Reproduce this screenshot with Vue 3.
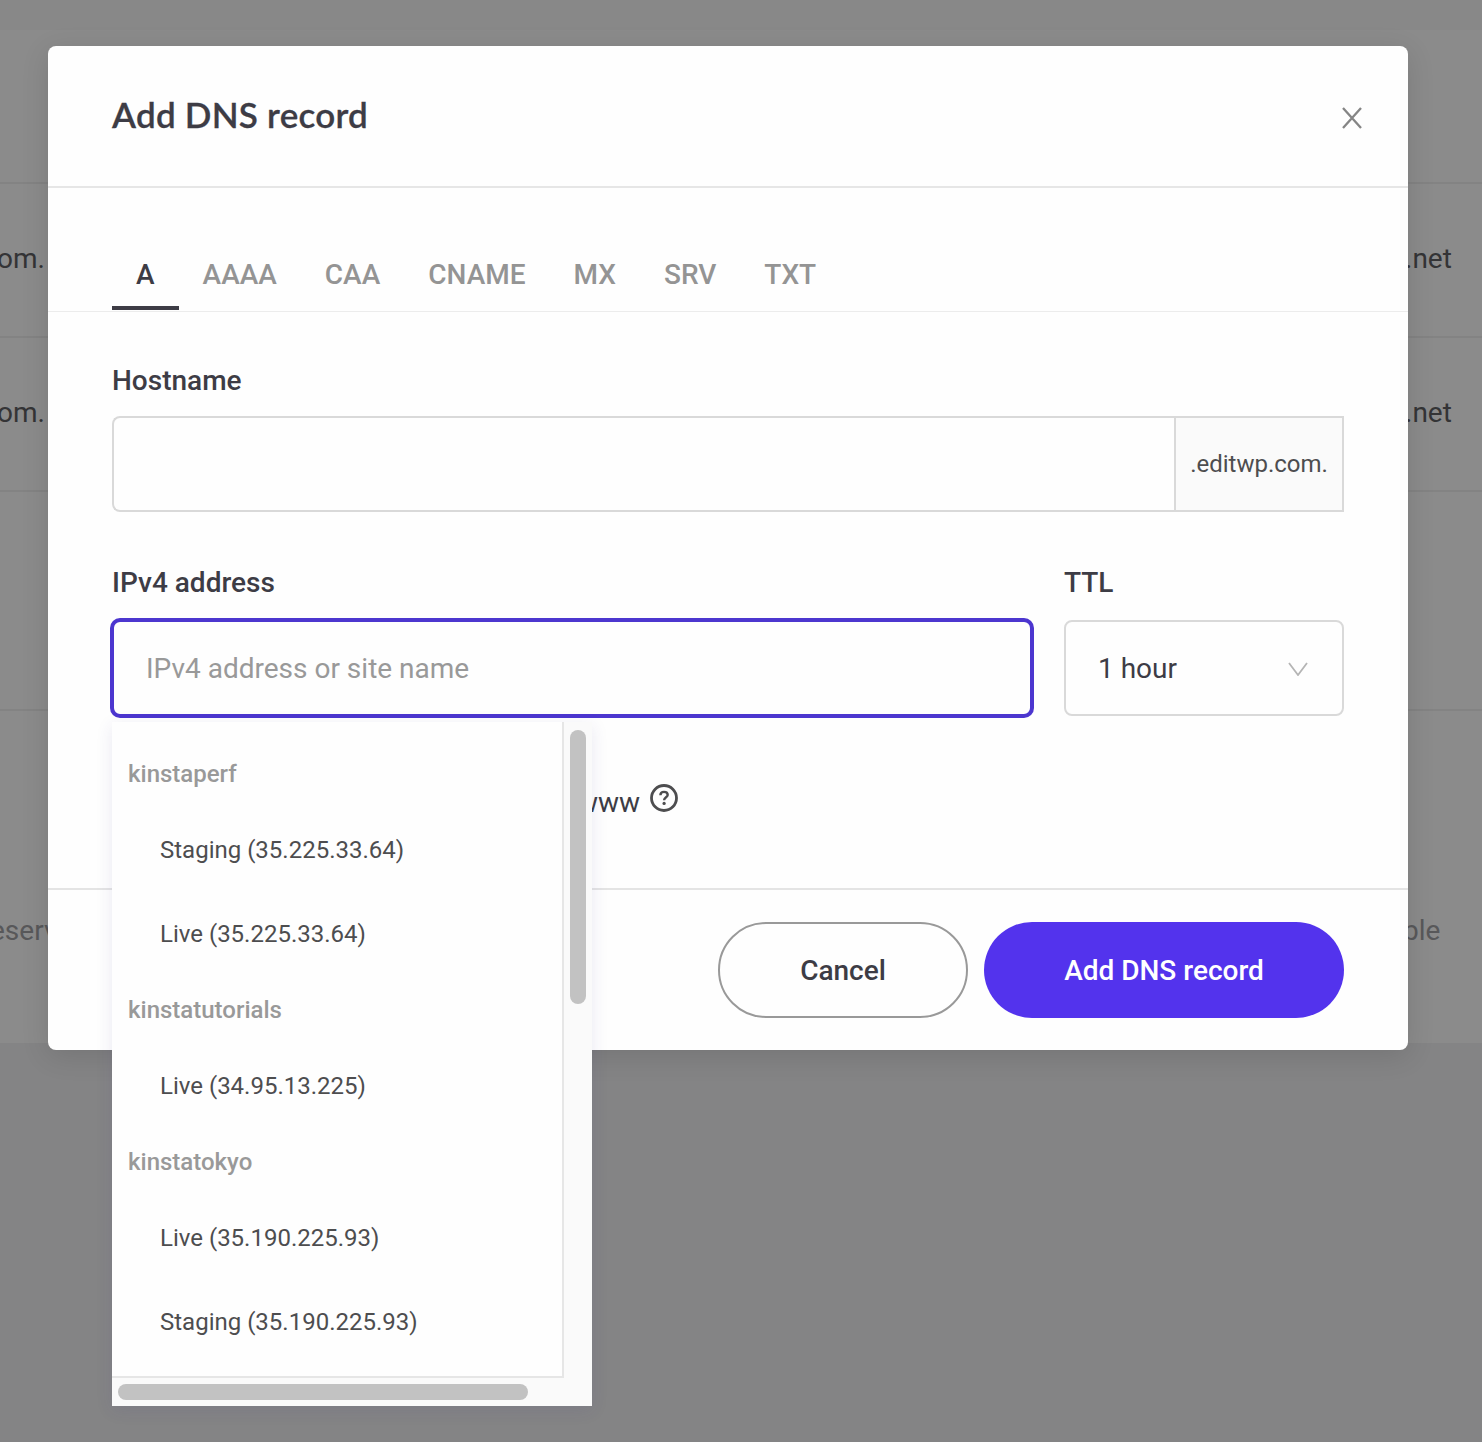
<template>
<div class="page">
    <div class="records">
        <div v-for="(row, i) in rows" :key="i" class="record" :class="row.type">
            <span class="record-name">{{ row.name }}</span>
            <span class="record-value">{{ row.value }}</span>
        </div>
    </div>

    <div class="overlay">
        <div class="modal">
            <div class="modal-header">
                <h1>Add DNS record</h1>
                <button type="button" class="close" aria-label="Close">
                    <svg width="20" height="22" viewBox="0 0 20 22" fill="none" stroke="#858585" stroke-width="2.3">
                        <path d="M1 1L19 21M19 1L1 21" />
                    </svg>
                </button>
            </div>

            <div class="tabs">
                <button
                    v-for="tab in tabs"
                    :key="tab"
                    type="button"
                    class="tab"
                    :class="{ active: tab === activeTab }"
                    @click="activeTab = tab"
                >{{ tab }}</button>
            </div>

            <div class="modal-body">
                <label class="label" for="hostname">Hostname</label>
                <div class="hostname">
                    <input id="hostname" v-model="hostname" type="text">
                    <span class="suffix">.editwp.com.</span>
                </div>

                <div class="fields">
                    <div class="field address">
                        <label class="label" for="address">IPv4 address</label>
                        <input id="address" v-model="address" type="text" class="address-input" placeholder="IPv4 address or site name">
                        <div class="dropdown">
                            <div class="options">
                                <div v-for="site in sites" :key="site.name">
                                    <div class="group">{{ site.name }}</div>
                                    <div v-for="env in site.envs" :key="env" class="option">{{ env }}</div>
                                </div>
                            </div>
                            <div class="track-y"><div class="thumb-y"></div></div>
                            <div class="track-x"><div class="thumb-x"></div></div>
                        </div>
                    </div>
                    <div class="field ttl">
                        <label class="label">TTL</label>
                        <div class="select">
                            <span>1 hour</span>
                            <svg width="20" height="14" viewBox="0 0 20 14" fill="none" stroke="#b5b5b5" stroke-width="1.8">
                                <path d="M1 1L10 13L19 1" />
                            </svg>
                        </div>
                    </div>
                </div>

                <div class="www-row">
                    <span>www</span>
                    <svg width="28" height="28" viewBox="0 0 28 28" fill="none" stroke="#4d4d4f">
                        <circle cx="14" cy="14" r="12.5" stroke-width="2.8" />
                        <path d="M10.4 11.2C10.4 9 12 7.9 14 7.9C16.2 7.9 17.7 9.1 17.7 11C17.7 13.2 14.1 13.5 14.1 16.3" stroke-width="2.4" />
                        <circle cx="14.1" cy="19.4" r="1.6" fill="#4d4d4f" stroke="none" />
                    </svg>
                </div>
            </div>

            <div class="modal-footer">
                <button type="button" class="btn cancel">Cancel</button>
                <button type="button" class="btn submit">Add DNS record</button>
            </div>
        </div>
    </div>
</div>
</template>


<script setup>
import { ref } from 'vue';

const tabs = ['A', 'AAAA', 'CAA', 'CNAME', 'MX', 'SRV', 'TXT'];
const activeTab = ref('A');

const hostname = ref('');
const address = ref('');

const sites = [
    { name: 'kinstaperf', envs: ['Staging (35.225.33.64)', 'Live (35.225.33.64)'] },
    { name: 'kinstatutorials', envs: ['Live (34.95.13.225)'] },
    { name: 'kinstatokyo', envs: ['Live (35.190.225.93)', 'Staging (35.190.225.93)'] }
];

const rows = [
    { type: 'head', name: '', value: '' },
    { type: 'row', name: 'om.', value: '.net' },
    { type: 'row', name: 'om.', value: '.net' },
    { type: 'spacer', name: '', value: '' },
    { type: 'foot', name: 'eserv', value: 'ble' }
];
</script>


<style>
body{
    margin: 0;
    overflow: hidden;
}
</style>

<style scoped>
*{
    box-sizing: border-box;
}

.page{
    position: relative;
    height: 1442px;
    overflow: hidden;
    background-color: #848485;
    color: #3d3c45;
    font-family: Roboto, "Liberation Sans", sans-serif;
    font-size: 28px;
}

button, input{
    font: inherit;
    letter-spacing: inherit;
    color: inherit;
}

/* dimmed table behind the dialog */
.records{
    padding-top: 30px;
    background-color: #8b8b8b;
    background-image: linear-gradient(#888888 30px, transparent 30px);
}

.record{
    display: flex;
    justify-content: space-between;
    align-items: center;
    height: 154px;
    padding-bottom: 2px;
    border-bottom: 2px solid #838383;
    color: #343436;
    line-height: 32px;
}

.record-name{
    margin-left: -3px;
}

.record-value{
    width: 77px;
}

.record.spacer{
    height: 219px;
}

.record.foot{
    height: 332px;
    padding-bottom: 0;
    border-bottom: 0;
    align-items: flex-start;
    padding-top: 204px;
    color: #58585a;
}

.foot .record-name{
    margin-left: -10px;
}

.foot .record-value{
    width: 79px;
}

.overlay{
    position: absolute;
    inset: 0;
    padding: 46px 74px 0 48px;
}

.modal{
    width: 1360px;
    height: 1004px;
    border-radius: 8px;
    background-color: #fefefe;
    box-shadow: 0 6px 28px rgba(0, 0, 0, 0.12);
    display: flex;
    flex-direction: column;
}

.modal-header{
    height: 142px;
    padding: 0 46px 0 64px;
    border-bottom: 2px solid #e6e6e6;
    display: flex;
    align-items: center;
    justify-content: space-between;
}

.modal-header h1{
    margin: 0 0 4px;
    font-family: Lato, sans-serif;
    font-size: 35px;
    font-weight: 600;
    line-height: 44px;
    letter-spacing: 0.25px;
    -webkit-text-stroke: 0.3px #3d3c45;
}

.close{
    display: flex;
    margin-top: 4px;
    padding: 0;
    border: 0;
    background: none;
}

.tabs{
    height: 124px;
    padding: 0 64px;
    border-bottom: 1px solid #ececec;
    display: flex;
    align-items: flex-end;
}

.tab{
    height: 70px;
    margin-bottom: 1px;
    padding: 2px 24px 0;
    border: 0;
    border-bottom: 4px solid transparent;
    background: none;
    color: #949494;
    font-weight: 500;
}

.tab.active{
    color: #3d3c45;
    border-bottom-color: #3d3c45;
}

.modal-body{
    height: 576px;
    padding: 52px 64px 0;
}

.label{
    display: block;
    height: 52px;
    line-height: 34px;
    font-weight: 500;
}

.hostname{
    height: 96px;
    display: flex;
    margin-bottom: 54px;
}

.hostname input{
    flex: 1;
    min-width: 0;
    border: 2px solid #d9d9d9;
    border-right: 0;
    border-radius: 8px 0 0 8px;
    background-color: #fefefe;
    outline: none;
}

.suffix{
    width: 170px;
    border: 2px solid #d9d9d9;
    background-color: #fafafa;
    color: #4d4d4f;
    font-size: 24px;
    display: flex;
    align-items: center;
    justify-content: center;
}

.fields{
    display: flex;
    gap: 32px;
}

.field{
    position: relative;
}

.field .label{
    height: 54px;
}

.address{
    width: 920px;
}

.address-input{
    display: block;
    width: 100%;
    height: 96px;
    padding: 0 32px;
    border: 2px solid #4c36cf;
    border-radius: 8px;
    background-color: #fefefe;
    box-shadow: 0 0 0 2px #4c36cf;
    outline: none;
}

.address-input::placeholder{
    color: #999999;
    opacity: 1;
}

.ttl{
    width: 280px;
}

.select{
    height: 96px;
    padding: 0 34px 0 32px;
    border: 2px solid #d9d9d9;
    border-radius: 8px;
    display: flex;
    align-items: center;
    justify-content: space-between;
}

.select svg{
    margin-top: 2px;
}

.www-row{
    display: flex;
    align-items: center;
    gap: 10px;
    height: 36px;
    margin-top: 68px;
    padding-left: 465px;
}

.www-row svg{
    margin-top: -8px;
}

.modal-footer{
    flex: 1;
    padding: 32px 64px;
    border-top: 2px solid #e4e4e4;
    display: flex;
    justify-content: flex-end;
    gap: 16px;
}

.btn{
    height: 96px;
    border-radius: 48px;
    font-weight: 500;
    padding: 0;
}

.cancel{
    width: 250px;
    border: 2px solid #999999;
    background-color: #fefefe;
}

.submit{
    width: 360px;
    border: 0;
    background-color: #5333ed;
    color: white;
}

/* site list hangs under the address input */
.dropdown{
    position: absolute;
    top: 156px;
    left: 0;
    z-index: 2;
    width: 480px;
    height: 684px;
    display: grid;
    grid-template-columns: 452px 28px;
    grid-template-rows: 656px 28px;
    background-color: #fafafa;
    box-shadow: 0 4px 16px rgba(60, 50, 140, 0.1);
}

.options{
    padding-top: 18px;
    overflow: hidden;
    border-right: 2px solid #e6e6e6;
    border-bottom: 2px solid #e6e6e6;
    background-color: #fefefe;
    font-size: 24px;
}

.group{
    height: 68px;
    padding-left: 16px;
    line-height: 68px;
    font-weight: 500;
    color: #999999;
}

.option{
    height: 84px;
    padding-left: 48px;
    line-height: 84px;
    color: #4d4d4f;
}

.track-y{
    padding: 8px 6px 0;
}

.thumb-y{
    width: 16px;
    height: 274px;
    border-radius: 8px;
    background-color: #c2c2c2;
}

.track-x{
    padding: 6px 6px 0;
}

.thumb-x{
    width: 410px;
    height: 16px;
    border-radius: 8px;
    background-color: #c2c2c2;
}
</style>
